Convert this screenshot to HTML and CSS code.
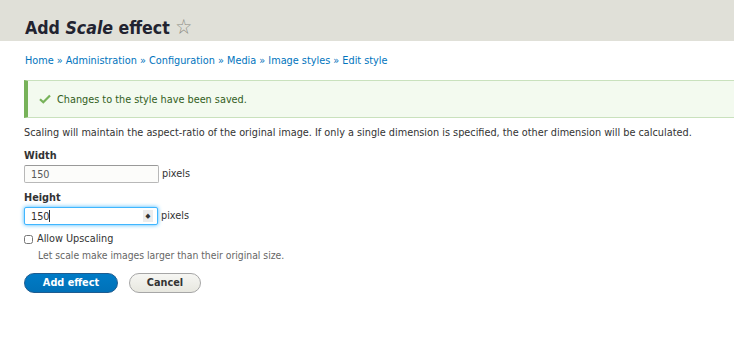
FILE: index.html
```html
<!DOCTYPE html>
<html>
<head>
<meta charset="utf-8">
<link rel="stylesheet" href="styles.css">
</head>
<body>
<header class="page-header">
  <h1 class="page-title">Add <em>Scale</em> effect <span class="star">☆</span></h1>
</header>
<main class="content">
  <nav class="breadcrumb">
    <a href="#">Home</a> » <a href="#">Administration</a> » <a href="#">Configuration</a> » <a href="#">Media</a> » <a href="#">Image styles</a> » <a href="#">Edit style</a>
  </nav>
  <div class="message">
    <svg class="check" width="12" height="10" viewBox="0 0 12 10"><path d="M1 5.2 L4.3 8.3 L11 1.5" fill="none" stroke="#77b259" stroke-width="2.2"/></svg>
    <span>Changes to the style have been saved.</span>
  </div>
  <p class="intro">Scaling will maintain the aspect-ratio of the original image. If only a single dimension is specified, the other dimension will be calculated.</p>
  <div class="field">
    <label class="field-label">Width</label>
    <div class="field-row">
      <input class="text-input" type="text" value="150">
      <span class="suffix">pixels</span>
    </div>
  </div>
  <div class="field">
    <label class="field-label">Height</label>
    <div class="field-row">
      <div class="input-wrap">
        <input class="text-input focused" type="text" value="150">
        <span class="caret"></span>
        <span class="spin">◆</span>
      </div>
      <span class="suffix">pixels</span>
    </div>
  </div>
  <div class="checkbox-row">
    <input class="checkbox" type="checkbox">
    <label class="checkbox-label">Allow Upscaling</label>
  </div>
  <div class="description">Let scale make images larger than their original size.</div>
  <div class="actions">
    <button class="btn btn-primary">Add effect</button>
    <button class="btn btn-secondary">Cancel</button>
  </div>
</main>
</body>
</html>
```
FILE: styles.css
```css
html, body {
  margin: 0;
  padding: 0;
  background: #fff;
  font-family: "DejaVu Sans Condensed", "DejaVu Sans", sans-serif;
  font-size: 10.8px;
  color: #333;
}
.page-header {
  background: #e0e0d8;
  height: 41px;
  padding: 17px 25px 0;
  box-sizing: border-box;
}
.page-title {
  margin: 0;
  font-size: 17.6px;
  line-height: 20px;
  font-weight: bold;
  color: #222330;
  display: flex;
  align-items: baseline;
  white-space: pre;
}
.page-title em {
  font-style: italic;
}
.star {
  font-weight: normal;
  color: #8a8a80;
  font-size: 21px;
  line-height: 20px;
}
.content {
  padding: 0 0 0 24px;
}
.breadcrumb {
  margin-top: 13px;
  line-height: 14px;
  color: #0074bd;
  padding-left: 1px;
}
.breadcrumb a {
  color: #0074bd;
  text-decoration: none;
}
.message {
  margin-top: 12px;
  height: 38px;
  box-sizing: border-box;
  background: #f3faef;
  border: 1px solid #c9e1bd;
  border-left: 4px solid #77b259;
  border-right: none;
  display: flex;
  align-items: center;
  padding-left: 11px;
  color: #325e1c;
  gap: 6px;
}
.intro {
  margin: 8px 0 0 0;
  line-height: 14px;
}
.field {
  margin-top: 9px;
}
.field + .field {
  margin-top: 8px;
}
.field-label {
  display: block;
  font-weight: bold;
  line-height: 14px;
  margin-bottom: 2px;
}
.field-row {
  display: flex;
  align-items: center;
  gap: 3px;
}
.text-input {
  width: 135px;
  height: 18px;
  box-sizing: border-box;
  border: 1px solid #b8b8b8;
  border-top-color: #999;
  border-radius: 2px;
  background: #fcfcfa;
  font-family: "DejaVu Sans Condensed", "DejaVu Sans", sans-serif;
  font-size: 10.8px;
  color: #595959;
  padding: 0 6px;
  margin: 0;
  outline: none;
}
.input-wrap {
  position: relative;
  display: flex;
}
.text-input.focused {
  width: 134px;
  background: #fff;
  border-color: #40b6ff;
  box-shadow: 0 0 4px #40b6ff;
  color: #333;
}
.caret {
  position: absolute;
  left: 25px;
  top: 3px;
  width: 1px;
  height: 12px;
  background: #333;
}
.spin {
  position: absolute;
  right: 5px;
  top: 3px;
  width: 10px;
  height: 12px;
  background: #ececec;
  color: #333;
  font-size: 7px;
  line-height: 12px;
  text-align: center;
}
.suffix {
  line-height: 14px;
}
.checkbox-row {
  display: flex;
  align-items: center;
  margin-top: 7px;
  gap: 4px;
}
.checkbox {
  margin: 0;
  width: 9px;
  height: 9px;
}
.checkbox-label {
  line-height: 14px;
}
.description {
  font-size: 10.3px;
  color: #666;
  margin: 3px 0 0 14px;
  line-height: 12px;
}
.actions {
  display: flex;
  gap: 11px;
  margin-top: 12px;
}
.btn {
  height: 20px;
  box-sizing: border-box;
  border-radius: 20px;
  font-family: "DejaVu Sans Condensed", "DejaVu Sans", sans-serif;
  font-size: 10.8px;
  font-weight: bold;
  padding: 0;
  margin: 0;
  line-height: 18px;
  text-align: center;
}
.btn-primary {
  width: 94px;
  background: linear-gradient(#007bc6, #0071b8);
  border: 1px solid #1e5c90;
  color: #fff;
}
.btn-secondary {
  width: 72px;
  background: linear-gradient(#f6f6f3, #e7e7df);
  border: 1px solid #a6a6a6;
  color: #333;
}
```
